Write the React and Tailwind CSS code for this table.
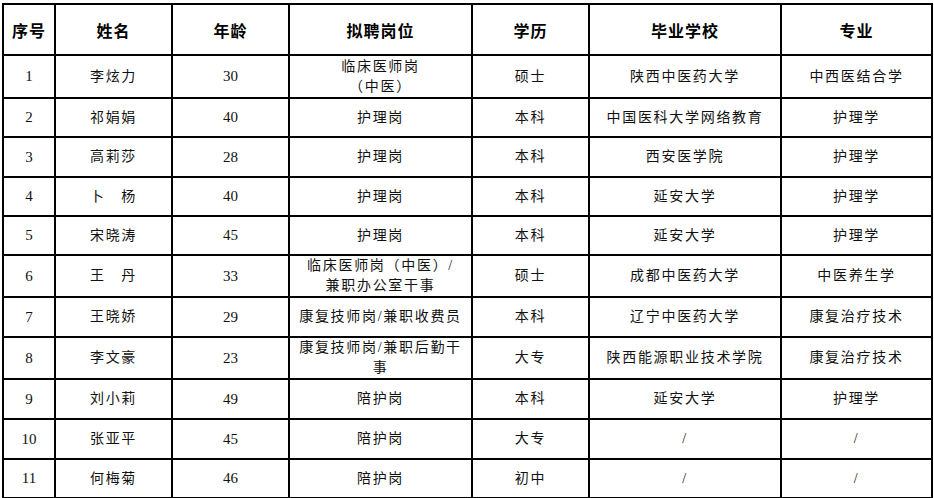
const headers = ["序号", "姓名", "年龄", "拟聘岗位", "学历", "毕业学校", "专业"];

const colWidths = ["w-[52px]", "w-[117px]", "w-[117px]", "w-[183px]", "w-[117px]", "w-[192px]", "w-[151px]"];

const rows = [
  { no: 1, name: "李炫力", age: 30, post: ["临床医师岗", "（中医）"], edu: "硕士", school: "陕西中医药大学", major: "中西医结合学", h: "h-[43px]" },
  { no: 2, name: "祁娟娟", age: 40, post: ["护理岗"], edu: "本科", school: "中国医科大学网络教育", major: "护理学", h: "h-[39px]" },
  { no: 3, name: "高莉莎", age: 28, post: ["护理岗"], edu: "本科", school: "西安医学院", major: "护理学", h: "h-[40px]" },
  { no: 4, name: "卜　杨", age: 40, post: ["护理岗"], edu: "本科", school: "延安大学", major: "护理学", h: "h-[39px]" },
  { no: 5, name: "宋晓涛", age: 45, post: ["护理岗"], edu: "本科", school: "延安大学", major: "护理学", h: "h-[39px]" },
  { no: 6, name: "王　丹", age: 33, post: ["临床医师岗（中医）/", "兼职办公室干事"], edu: "硕士", school: "成都中医药大学", major: "中医养生学", h: "h-[42px]" },
  { no: 7, name: "王晓娇", age: 29, post: ["康复技师岗/兼职收费员"], edu: "本科", school: "辽宁中医药大学", major: "康复治疗技术", h: "h-[40px]" },
  { no: 8, name: "李文豪", age: 23, post: ["康复技师岗/兼职后勤干", "事"], edu: "大专", school: "陕西能源职业技术学院", major: "康复治疗技术", h: "h-[41px]" },
  { no: 9, name: "刘小莉", age: 49, post: ["陪护岗"], edu: "本科", school: "延安大学", major: "护理学", h: "h-[40px]" },
  { no: 10, name: "张亚平", age: 45, post: ["陪护岗"], edu: "大专", school: "/", major: "/", h: "h-[40px]" },
  { no: 11, name: "何梅菊", age: 46, post: ["陪护岗"], edu: "初中", school: "/", major: "/", h: "h-[39px]" },
];

const cell = "border-2 border-black text-center align-middle p-0";
const cn = "text-[14px] tracking-[1.7px] leading-[20px] text-[#111]";
const num = "text-[15px] text-[#111]";

export default function App() {
  return (
    <div className="bg-white w-[934px] h-[498px] pt-[3px] pl-[2px] font-['Liberation_Serif','Noto_Sans_CJK_SC',serif]">
      <table className="table-fixed border-collapse w-[931px]">
        <colgroup>
          {colWidths.map((w, i) => (
            <col key={i} className={w} />
          ))}
        </colgroup>
        <thead>
          <tr className="h-[51px]">
            {headers.map((h) => (
              <th
                key={h}
                className={`${cell} font-['Noto_Sans_CJK_SC',sans-serif] font-bold text-[16px] tracking-[1px] text-black`}
              >
                {h}
              </th>
            ))}
          </tr>
        </thead>
        <tbody>
          {rows.map((r) => (
            <tr key={r.no} className={r.h}>
              <td className={`${cell} ${num}`}>{r.no}</td>
              <td className={`${cell} ${cn}`}>{r.name}</td>
              <td className={`${cell} ${num}`}>{r.age}</td>
              <td className={`${cell} ${cn}`}>
                {r.post.map((line, i) => (
                  <div key={i}>{line}</div>
                ))}
              </td>
              <td className={`${cell} ${cn}`}>{r.edu}</td>
              <td className={`${cell} ${cn}`}>{r.school}</td>
              <td className={`${cell} ${cn}`}>{r.major}</td>
            </tr>
          ))}
        </tbody>
      </table>
    </div>
  );
}
